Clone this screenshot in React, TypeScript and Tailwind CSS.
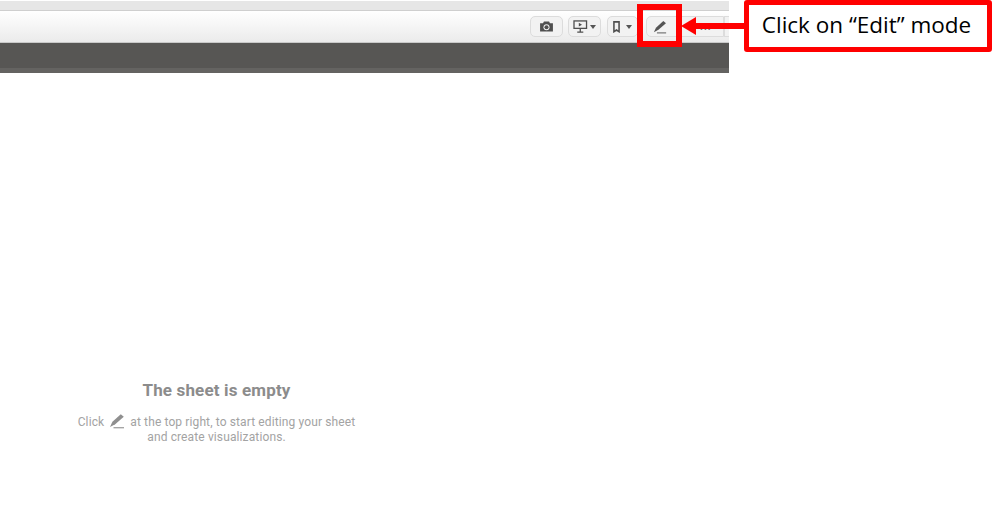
import React from "react";

function Pencil({ className }: { className: string }) {
  return (
    <svg viewBox="0 0 16 16" className={className} fill="currentColor">
      <path d="M11.8 1.2 14.8 3.8 6.2 11.2 1 14 3.4 8.8Z" />
      <rect x="4.5" y="14.2" width="10.5" height="1.1" />
    </svg>
  );
}

function Caret({ gap }: { gap: string }) {
  return <span className={`h-0 w-0 border-x-[3px] border-t-[4px] border-x-transparent border-t-[#555] ${gap}`} />;
}

function ToolButton({ width, children }: { width: string; children: React.ReactNode }) {
  return (
    <div className={`flex h-[21px] items-center justify-center rounded-[5px] border border-[#dcdcdc] bg-[#f2f2f2] ${width}`}>
      {children}
    </div>
  );
}

export default function App() {
  return (
    <div className="relative h-[521px] w-[992px] overflow-hidden bg-white" style={{ fontFamily: "Roboto, sans-serif" }}>
      <div className="w-[729px]">
        <div className="mt-px h-[10px] border-b border-[#cfcfcf] bg-[#e6e6e6]" />
        <div className="flex h-[32px] items-center justify-end overflow-hidden border-b border-[#c9c9c9] bg-gradient-to-b from-white to-[#ebebeb]">
          <div className="flex items-center">
            <ToolButton width="w-[33px]">
              <svg viewBox="0 0 16 12" className="h-[11px] w-[15px]" fill="#4f4f4f">
                <path d="M1 2.5h3.2L5.2 0.5h5.6l1 2H15v9H1Z" />
                <circle cx="8" cy="6.8" r="3.3" fill="#f2f2f2" />
                <circle cx="8" cy="6.8" r="2.2" />
              </svg>
            </ToolButton>
            <div className="ml-[5px]">
              <ToolButton width="w-[33px]">
                <svg viewBox="0 0 16 14" className="h-[13px] w-[15px]" fill="none" stroke="#4f4f4f" strokeWidth="1.4">
                  <rect x="1" y="1" width="13.5" height="8" />
                  <path d="M7.75 9v4M4.5 13h6.5" />
                  <path d="M6.2 3l3.4 2-3.4 2Z" fill="#4f4f4f" stroke="none" />
                </svg>
                <Caret gap="ml-[2px]" />
              </ToolButton>
            </div>
            <div className="ml-[6px]">
              <ToolButton width="w-[31px]">
                <svg viewBox="0 0 8 14" className="h-[12px] w-[7px]" fill="none" stroke="#4f4f4f" strokeWidth="1.8">
                  <path d="M1 1h6v11.5l-3-2-3 2Z" />
                </svg>
                <Caret gap="ml-[6px]" />
              </ToolButton>
            </div>
            <div className="ml-[8px] flex h-[21px] w-[78px] items-center rounded-l-[5px] border border-[#dcdcdc] bg-[#f2f2f2] pl-[6px]">
              <Pencil className="h-[14px] w-[14px] text-[#555]" />
              <span className="ml-[33px] text-[10px] leading-none font-bold tracking-[1px] text-[#666]">...</span>
            </div>
            <div className="h-[21px] w-[5px] border-y border-l border-[#dcdcdc] bg-[#f2f2f2]" />
          </div>
        </div>
        <div className="h-[25px] bg-[#575654]" />
        <div className="h-[5px] bg-[#646361]" />
      </div>

      <div className="mt-[307px] w-[433px] text-center">
        <div className="text-[17px] leading-[20px] font-bold tracking-[0.15px] text-[#8c8c8c]">The sheet is empty</div>
        <div className="mt-[15px] flex h-[15px] items-center justify-center text-[12px] leading-[15px] tracking-[0.12px] text-[#a3a3a3]">
          Click
          <Pencil className="mx-[5px] mb-[3px] h-[16px] w-[16px] shrink-0 text-[#8f8f8f]" />
          at the top right, to start editing your sheet
        </div>
        <div className="text-[12px] leading-[15px] tracking-[0.12px] text-[#a3a3a3]">and create visualizations.</div>
      </div>

      {/* Annotation overlays */}
      <div className="absolute top-[4px] left-[637px] h-[43px] w-[45px] border-[6px] border-[#ff0000]" />
      <div className="absolute top-[23px] left-[696px] h-[6px] w-[48px] bg-[#ff0000]" />
      <div className="absolute top-[17px] left-[681px] h-0 w-0 border-y-[9px] border-r-[15px] border-y-transparent border-r-[#ff0000]" />
      <div
        className="absolute top-0 left-[744px] flex h-[52px] w-[248px] items-center justify-center rounded-[3px] border-[5px] border-[#ff0000] bg-white pr-[3px] pb-[2px] text-[22.5px] text-black"
        style={{ fontFamily: "'Open Sans', sans-serif" }}
      >
        Click on “Edit” mode
      </div>
    </div>
  );
}
